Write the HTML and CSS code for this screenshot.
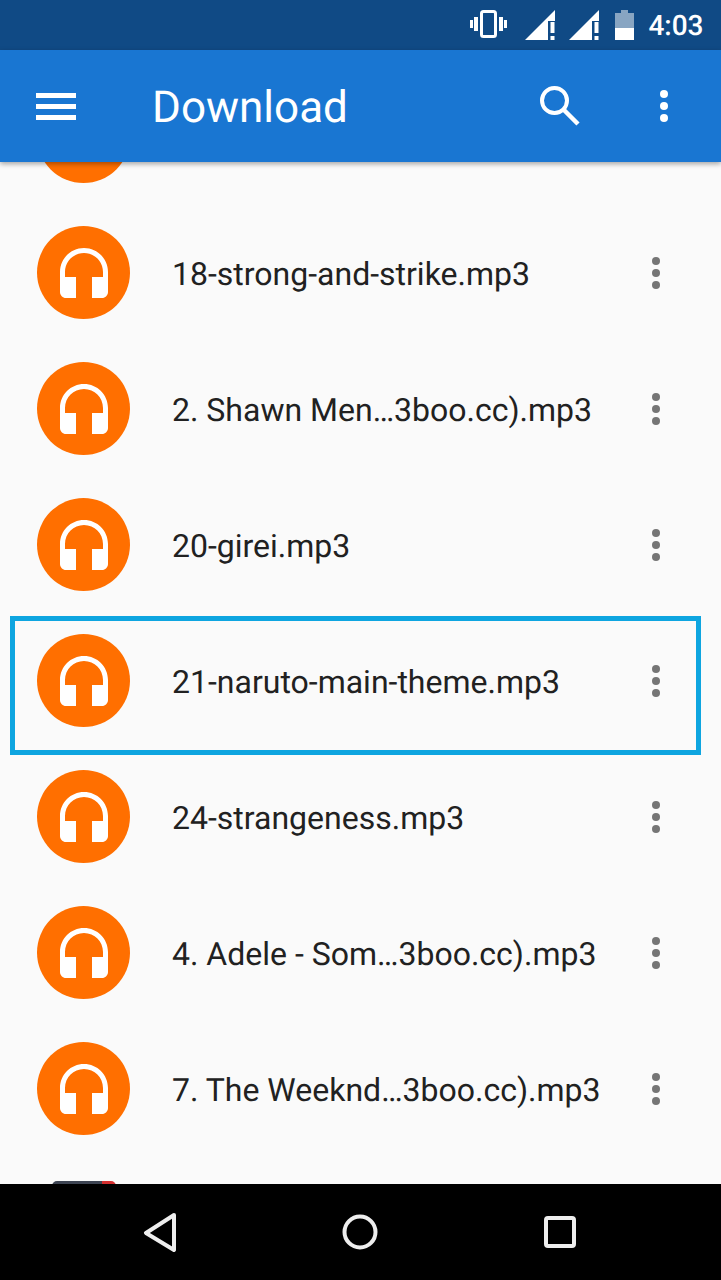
FILE: index.html
```html
<html>
<head>
    <title>Download</title>
    <meta charset="UTF-8">
    <meta name="viewport" content="width=device-width, initial-scale=1.0">
    <link rel="stylesheet" href="styles.css">
</head>

<body>
    <svg class="defs" width="0" height="0">
        <symbol id="headset" viewBox="0 0 48 50">
            <path d="M24 0C10.7 0 0 10.7 0 24V44C0 47.3 2.7 50 6 50H16V29H5V24C5 13.5 13.5 5 24 5S43 13.5 43 24V29H32V50H42C45.3 50 48 47.3 48 44V24C48 10.7 37.3 0 24 0Z"/>
        </symbol>
        <symbol id="dots" viewBox="0 0 8 32">
            <circle cx="4" cy="4" r="4"/>
            <circle cx="4" cy="16" r="4"/>
            <circle cx="4" cy="28" r="4"/>
        </symbol>
        <symbol id="signal" viewBox="0 0 31 30">
            <path d="M0 30 L30 0 V11 H23 V30 Z" fill="#fff"/>
            <rect x="25.5" y="12" width="4" height="11" fill="#fff"/>
            <rect x="25.5" y="26" width="4" height="4" fill="#fff"/>
        </symbol>
    </svg>

    <div class="status-bar">
        <svg class="st-vibrate" viewBox="0 0 37 28">
            <rect x="11.5" y="1.5" width="14" height="25" rx="2" fill="none" stroke="#fff" stroke-width="3"/>
            <rect x="4" y="7" width="4" height="14" fill="#fff"/>
            <rect x="29" y="7" width="4" height="14" fill="#fff"/>
            <rect x="0" y="10" width="3" height="8" fill="#fff"/>
            <rect x="34" y="10" width="3" height="8" fill="#fff"/>
        </svg>
        <svg class="st-signal"><use href="#signal"/></svg>
        <svg class="st-signal"><use href="#signal"/></svg>
        <svg class="st-battery" viewBox="0 0 19 30">
            <path d="M6 0h7v3h6v27H0V3h6z" fill="#fff" opacity="0.5"/>
            <rect x="0" y="18" width="19" height="12" fill="#fff"/>
        </svg>
        <span class="st-time">4:03</span>
    </div>

    <div class="app-bar">
        <div class="menu-icon"><span></span><span></span><span></span></div>
        <div class="app-title">Download</div>
        <svg class="search-icon" viewBox="0 0 40 40">
            <circle cx="14.5" cy="14.5" r="12.5" fill="none" stroke="#fff" stroke-width="4"/>
            <path d="M24 24 L38 38" stroke="#fff" stroke-width="4.5" fill="none"/>
        </svg>
        <svg class="bar-dots"><use href="#dots"/></svg>
    </div>

    <div class="file-list">
        <div class="file-row first-row">
            <div class="file-icon"><svg><use href="#headset"/></svg></div>
        </div>
        <div class="file-row">
            <div class="file-icon"><svg><use href="#headset"/></svg></div>
            <div class="file-name">18-strong-and-strike.mp3</div>
            <svg class="row-dots"><use href="#dots"/></svg>
        </div>
        <div class="file-row">
            <div class="file-icon"><svg><use href="#headset"/></svg></div>
            <div class="file-name">2. Shawn Men…3boo.cc).mp3</div>
            <svg class="row-dots"><use href="#dots"/></svg>
        </div>
        <div class="file-row">
            <div class="file-icon"><svg><use href="#headset"/></svg></div>
            <div class="file-name">20-girei.mp3</div>
            <svg class="row-dots"><use href="#dots"/></svg>
        </div>
        <div class="file-row selected">
            <div class="file-icon"><svg><use href="#headset"/></svg></div>
            <div class="file-name">21-naruto-main-theme.mp3</div>
            <svg class="row-dots"><use href="#dots"/></svg>
            <div class="highlight"></div>
        </div>
        <div class="file-row">
            <div class="file-icon"><svg><use href="#headset"/></svg></div>
            <div class="file-name">24-strangeness.mp3</div>
            <svg class="row-dots"><use href="#dots"/></svg>
        </div>
        <div class="file-row">
            <div class="file-icon"><svg><use href="#headset"/></svg></div>
            <div class="file-name">4. Adele - Som…3boo.cc).mp3</div>
            <svg class="row-dots"><use href="#dots"/></svg>
        </div>
        <div class="file-row">
            <div class="file-icon"><svg><use href="#headset"/></svg></div>
            <div class="file-name">7. The Weeknd…3boo.cc).mp3</div>
            <svg class="row-dots"><use href="#dots"/></svg>
        </div>
        <div class="file-row">
            <div class="file-thumb"></div>
        </div>
    </div>

    <div class="nav-bar">
        <svg class="nav-icon" viewBox="0 0 40 40">
            <path d="M34 3 L6 21 L34 38 Z" fill="none" stroke="#eee" stroke-width="4" stroke-linejoin="round"/>
        </svg>
        <svg class="nav-icon" viewBox="0 0 40 40">
            <circle cx="20" cy="20" r="15.5" fill="none" stroke="#eee" stroke-width="4"/>
        </svg>
        <svg class="nav-icon" viewBox="0 0 40 40">
            <rect x="6" y="6" width="28" height="28" rx="2" fill="none" stroke="#eee" stroke-width="4"/>
        </svg>
    </div>
</body>
</html>
```

FILE: styles.css
```css
/* Page */
body {
    font-family: Roboto, "Liberation Sans", sans-serif;
    margin: 0;
    height: 1280px;
    overflow: hidden;
    display: flex;
    flex-direction: column;
    background-color: #fafafa;
    text-rendering: geometricPrecision;
}

.defs {
    position: absolute;
}

/* Status bar */
.status-bar {
    height: 50px;
    flex: none;
    display: flex;
    align-items: center;
    padding-right: 17.5px;
    justify-content: flex-end;
    background-color: #104a85;
    color: #fff;
}

.st-vibrate {
    width: 37px;
    height: 28px;
    margin-right: 18px;
    margin-bottom: 2px;
}

.st-signal {
    width: 31px;
    height: 30px;
    margin-right: 13px;
}

.st-battery {
    width: 19px;
    height: 30px;
    margin-left: 2px;
    margin-right: 14px;
}

.st-time {
    font-size: 28px;
    font-weight: 500;
}

/* App bar */
.app-bar {
    height: 112px;
    flex: none;
    display: flex;
    align-items: center;
    background-color: #1976d2;
    box-shadow: 0 2px 5px rgba(0, 0, 0, 0.35);
    position: relative;
    z-index: 2;
    color: #fff;
}

.menu-icon {
    width: 40px;
    margin-left: 36px;
    display: flex;
    flex-direction: column;
    gap: 6px;
}

.menu-icon span {
    height: 5px;
    background-color: #fff;
}

.app-title {
    font-size: 44px;
    margin-left: 76px;
    padding-top: 2px;
    flex: 1;
}

.search-icon {
    width: 40px;
    height: 40px;
    margin-right: 80px;
}

.bar-dots {
    width: 8px;
    height: 32px;
    fill: #fff;
    margin-right: 53px;
}

/* List */
.file-list {
    flex: 1;
    min-height: 0;
    overflow: hidden;
}

.file-row {
    height: 136px;
    display: flex;
    align-items: center;
    position: relative;
}

.first-row {
    margin-top: -93px;
}

.file-icon {
    width: 93px;
    height: 93px;
    margin-left: 37px;
    margin-right: 42px;
    margin-bottom: 1px;
    border-radius: 50%;
    background-color: #ff6f00;
    display: flex;
    align-items: center;
    justify-content: center;
    flex: none;
}

.file-icon svg {
    width: 48px;
    height: 50px;
    fill: #fff;
}

.file-thumb {
    width: 64px;
    height: 88px;
    margin-left: 52px;
    border-radius: 5px;
    background: linear-gradient(to right, #3d4452 78%, #d32f2f 78%);
}

.file-name {
    flex: 1;
    font-size: 32px;
    color: #212121;
    white-space: nowrap;
    padding-top: 1px;
}

.row-dots {
    width: 8px;
    height: 32px;
    fill: #757575;
    margin-right: 61px;
    flex: none;
}

/* Cadre de selection */
.highlight {
    position: absolute;
    top: 3px;
    bottom: -6px;
    left: 10px;
    right: 20px;
    border: 5px solid #0ea5e0;
}

/* Navigation */
.nav-bar {
    height: 96px;
    flex: none;
    display: flex;
    align-items: center;
    justify-content: center;
    gap: 160px;
    padding-right: 1px;
    background-color: #000;
    position: relative;
    z-index: 2;
}

.nav-icon {
    width: 40px;
    height: 40px;
}
```
